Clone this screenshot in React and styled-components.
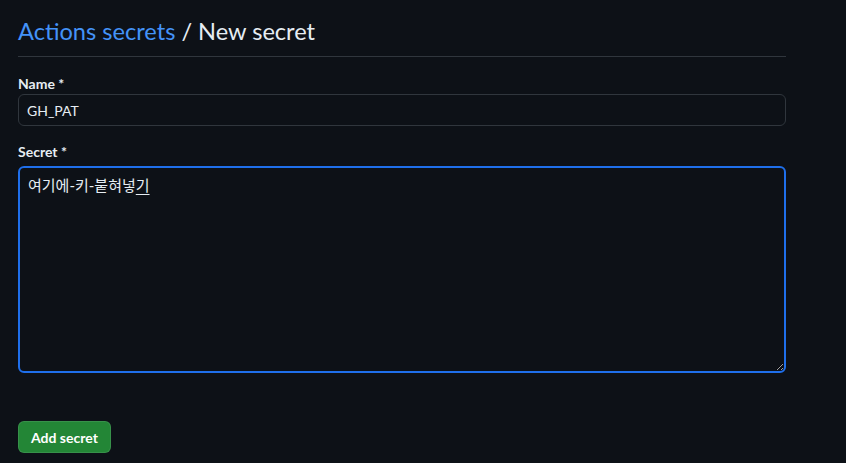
import React from "react";
import styled, { createGlobalStyle } from "styled-components";

const GlobalStyle = createGlobalStyle`
  body {
    margin: 0;
    background: #0d1117;
    color: #e6edf3;
    font-family: Lato, "Noto Sans CJK KR", sans-serif;
  }
`;

const Page = styled.div`
  width: 768px;
  padding: 13px 0 0 18px;
`;

const Subhead = styled.div`
  padding-bottom: 7px;
  border-bottom: 1px solid #30363d;
  margin-bottom: 17px;
`;

const Heading = styled.h2`
  margin: 0;
  font-size: 23.6px;
  font-weight: 400;
  line-height: 36px;
  color: #e6edf3;
`;

const Crumb = styled.a`
  color: #4493f8;
  text-decoration: none;
`;

const FormGroup = styled.div`
  display: flex;
  flex-direction: column;
  margin-bottom: ${(p) => p.$gap || "16px"};
`;

const Label = styled.label`
  font-size: 14px;
  font-weight: 700;
  line-height: 20px;
  margin-bottom: ${(p) => p.$gap || "0"};
`;

const Input = styled.input`
  box-sizing: border-box;
  height: 32px;
  padding: 0 8px;
  font-family: inherit;
  font-size: 14px;
  color: #e6edf3;
  background: #0d1117;
  border: 1px solid #30363d;
  border-radius: 6px;
  outline: none;
`;

const TextArea = styled.div`
  box-sizing: border-box;
  height: 207px;
  padding: 7px 8px;
  font-size: 15px;
  line-height: 20px;
  color: #e6edf3;
  background: #0d1117;
  border: 2px solid #1f6feb;
  border-radius: 6px;
  resize: vertical;
  overflow: auto;
`;

const Composing = styled.span`
  text-decoration: underline;
  text-underline-offset: 3px;
`;

const SubmitButton = styled.button`
  height: 32px;
  padding: 0 12px;
  font-family: inherit;
  font-size: 14px;
  font-weight: 700;
  color: #ffffff;
  background: #238636;
  border: 1px solid rgba(240, 246, 252, 0.1);
  border-radius: 6px;
  cursor: pointer;
`;

const App = () => {
  return (
    <Page>
      <GlobalStyle />
      <Subhead>
        <Heading>
          <Crumb href="#">Actions secrets</Crumb> / New secret
        </Heading>
      </Subhead>

      <FormGroup>
        <Label htmlFor="name">Name *</Label>
        <Input id="name" type="text" defaultValue="GH_PAT" />
      </FormGroup>

      <FormGroup $gap="48px">
        <Label $gap="4px">Secret *</Label>
        <TextArea role="textbox">
          여기에-키-붙혀넣<Composing>기</Composing>
        </TextArea>
      </FormGroup>

      <SubmitButton type="button">Add secret</SubmitButton>
    </Page>
  );
};

export default App;
